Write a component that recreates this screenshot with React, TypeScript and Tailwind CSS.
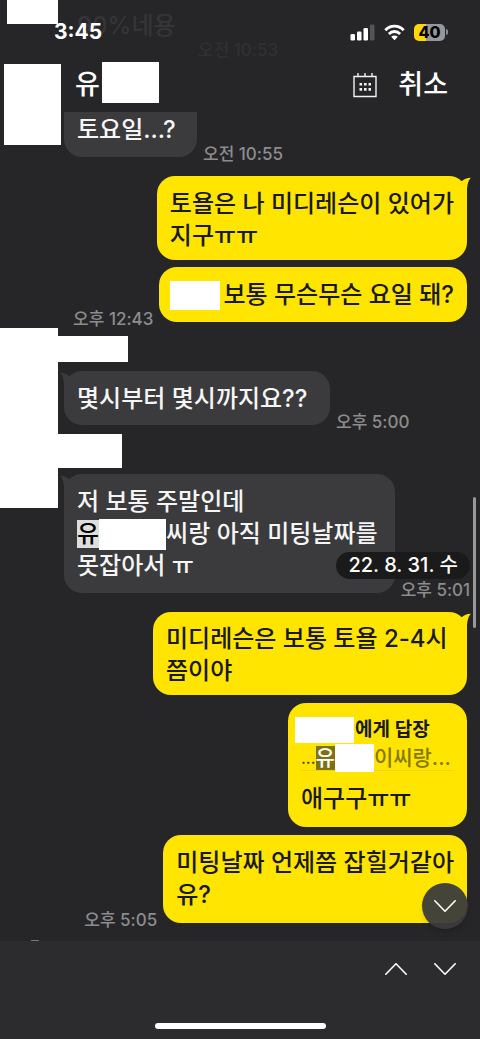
import { ReactNode } from "react";
import clsx from "clsx";

function Tail({ mine }: { mine?: boolean }) {
  return (
    <svg
      aria-hidden="true"
      width="12"
      height="20"
      viewBox="0 0 12 20"
      className={clsx(
        "absolute top-0",
        mine ? "-right-1 text-[#ffe500]" : "-left-1 -scale-x-100 text-[#3b3b3d]"
      )}
    >
      <path d="M3 5 Q6 2 11.800 1.800 Q8.400 5.500 8 13 V20 H0 V7 Z" fill="currentColor" />
    </svg>
  );
}

interface MessageProps {
  mine?: boolean;
  tail?: boolean;
  time?: string;
  className?: string;
  children: ReactNode;
}

function Message({ mine, tail, time, className, children }: MessageProps) {
  return (
    <div className={clsx("flex items-end gap-1.5", mine && "flex-row-reverse pr-[13px]")}>
      <div
        className={clsx(
          "relative shrink-0 px-[13px] text-2xl leading-8",
          mine ? "bg-[#ffe500] text-[#191919]" : "bg-[#3b3b3d] text-[#f5f5f5]",
          time && "mb-1",
          className ?? "rounded-[18px] pt-3 pb-[11px]"
        )}
      >
        {tail && <Tail mine={mine} />}
        {children}
      </div>
      {time && (
        <time className="text-[17px] leading-[14px] whitespace-nowrap text-[#8c8c8e]">{time}</time>
      )}
    </div>
  );
}

function StatusIcons() {
  return (
    <div className="flex items-center gap-[9px]">
      <svg aria-hidden="true" width="25" height="17" viewBox="0 0 25 17" fill="#fff">
        <rect x="0.500" y="10" width="4.500" height="6.500" rx="1.300" />
        <rect x="7" y="7.500" width="4.500" height="9" rx="1.300" />
        <rect x="13.500" y="4" width="4.500" height="12.500" rx="1.300" />
        <rect x="20" y="0.500" width="4.500" height="16" rx="1.300" fill="#555557" />
      </svg>
      <svg aria-hidden="true" width="21" height="17" viewBox="0 0 21 17" fill="none" stroke="#fff" strokeWidth="2.900">
        <path d="M1.300 6.200 C6.500 0.800 14.500 0.800 19.700 6.200" />
        <path d="M4.900 9.900 C8 6.700 13 6.700 16.100 9.900" />
        <path d="M7.200 12.800 Q10.500 10 13.800 12.800 L10.500 16.200 Z" fill="#fff" stroke="none" />
      </svg>
      <div className="flex items-center gap-px">
        <span className="flex h-[17px] w-[31px] items-center justify-center rounded-[5px] bg-linear-to-r from-[#ffd60a] from-40% to-[#98989a] to-40% text-base leading-none font-extrabold text-black">
          40
        </span>
        <span className="h-1.5 w-0.5 rounded-r-full bg-[#8c8c8e]" />
      </div>
    </div>
  );
}

function Chevron({ up }: { up?: boolean }) {
  return (
    <svg
      aria-hidden="true"
      width="22"
      height="12"
      viewBox="0 0 22 12"
      fill="none"
      stroke="#fff"
      strokeWidth="1.600"
      strokeLinecap="round"
    >
      <path d={up ? "M0.800 11.200 L11 0.800 L21.200 11.200" : "M0.800 0.800 L11 11.200 L21.200 0.800"} />
    </svg>
  );
}

function Header() {
  return (
    <header className="relative h-28">
      <span className="absolute top-2 left-[77px] text-2xl leading-9 text-[#353537]">90%네용</span>
      <span className="absolute top-10 left-[198px] text-[17px] leading-5 text-[#303032]">
        오전 10:53
      </span>
      <span className="absolute top-0 left-[7px] h-6 w-[51px] bg-white" />
      <span className="absolute top-16 left-1 h-[81px] w-[57px] bg-white" />
      <div className="relative flex h-16 items-center justify-between pr-8 pl-[54px]">
        <span className="text-[21px] leading-6 font-bold text-white">3:45</span>
        <StatusIcons />
      </div>
      <div className="relative -mt-0.5 flex h-11 items-center pt-0.5 pr-8 pl-[75px] text-[27px] leading-10 text-white">
        <h1 className="w-[27px]">유</h1>
        <span className="-mt-1.5 h-[41px] w-[57px] bg-white" />
        <button type="button" aria-label="날짜 선택" className="ml-auto">
          <svg aria-hidden="true" width="24" height="26" viewBox="0 0 24 26" fill="none" stroke="#f2f2f2" strokeWidth="1.400">
            <path d="M1 4.500 H23 V24.500 H1 Z M5 1 V4.500 M12 1 V4.500 M19 1 V4.500" />
            <path d="M6.500 12.200 H18 M6.500 17.400 H18" strokeWidth="2.600" strokeDasharray="2.600 1.900" />
          </svg>
        </button>
        <button type="button" className="ml-[21px]">
          취소
        </button>
      </div>
    </header>
  );
}

export default function App() {
  return (
    <div className="flex min-h-screen flex-col bg-[#262628] font-['Inter','Noto_Sans_CJK_KR',sans-serif] font-medium">
      <Header />

      <main className="relative flex-1 pb-[14px]">
        <div className="pl-16">
          <Message time="오전 10:55" className="min-w-[133px] rounded-b-[18px] pt-0.5 pb-[11px]">
            토요일...?
          </Message>
        </div>

        <div className="mt-[15px] flex flex-col gap-[7px]">
          <Message mine tail className="rounded-[18px] pt-3 pb-2">
            토욜은 나 미디레슨이 있어가
            <br />
            지구ㅠㅠ
          </Message>
          <Message mine time="오후 12:43">
            <span className="flex items-center">
              <span className="-ml-0.5 mr-[3px] h-[29px] w-[50px] bg-white" />
              보통 무슨무슨 요일 돼?
            </span>
          </Message>
        </div>

        <div className="mt-0.5 flex items-start">
          <div className="h-[180px] w-[58px] shrink-0 bg-white" />
          <div className="pt-2">
            <div className="h-[26px] w-[70px] bg-white" />
            <div className="mt-[9px] pl-1.5">
              <Message tail time="오후 5:00" className="min-w-[266px] rounded-[18px] pt-3 pb-[10px]">
                몇시부터 몇시까지요??
              </Message>
            </div>
            <div className="mt-[5px] h-[34px] w-16 bg-white" />
            <div className="mt-1.5 pl-1.5">
              <Message tail time="오후 5:01">
                저 보통 주말인데
                <br />
                <span className="flex items-center">
                  <mark className="bg-[#dedede] leading-7 text-black">유</mark>
                  <span className="h-[31px] w-[67px] bg-white" />
                  <span className="pr-1">씨랑 아직 미팅날짜를</span>
                </span>
                못잡아서 ㅠ
              </Message>
            </div>
          </div>
        </div>

        <div className="mt-[15px] flex flex-col gap-2">
          <Message mine tail className="min-w-[314px] rounded-[18px] pt-[11px] pb-2">
            미디레슨은 보통 토욜 2-4시
            <br />
            쯤이야
          </Message>
          <Message mine className="w-[179px] rounded-[18px] pt-3 pb-3">
            <div className="flex h-7 items-center pt-0.5 text-[19px] leading-7 font-semibold">
              <span className="-ml-1.5 mr-px h-[26px] w-[59px] bg-white" />
              에게 답장
            </div>
            <div className="flex h-7 items-center border-b border-[#efd700] pt-0.5 text-[21px] leading-7 text-[#85780a]">
              <span className="text-base text-[#4d4508]">...</span>
              <mark className="bg-[#7d7112] leading-6 text-white">유</mark>
              <span className="h-7 w-[39px] bg-white" />
              <span>이씨랑...</span>
            </div>
            <p className="mt-3">애구구ㅠㅠ</p>
          </Message>
          <Message mine time="오후 5:05" className="rounded-[18px] py-3">
            미팅날짜 언제쯤 잡힐거같아
            <br />
            유?
          </Message>
        </div>

        <div className="absolute top-[440px] right-2.5 rounded-full bg-[#1a1a1b] px-3 text-xl leading-[27px] text-white">
          22. 8. 31. 수
        </div>
        <div className="absolute top-[385px] right-1 h-[131px] w-[3px] rounded-full bg-[#98989a]" />
        <button
          type="button"
          aria-label="맨 아래로"
          className="absolute right-3 bottom-3 flex size-[46px] items-center justify-center rounded-full bg-[#3b3b3b]/95 shadow-md"
        >
          <Chevron />
        </button>
        <span className="absolute bottom-0 left-[31px] h-px w-2 bg-[#777779]" />
      </main>

      <footer className="flex h-[98px] flex-col items-center justify-between bg-[#2c2c2e] pb-2.5">
        <nav className="flex w-full justify-end gap-[27px] pt-[22px] pr-6">
          <button type="button" aria-label="이전 결과">
            <Chevron up />
          </button>
          <button type="button" aria-label="다음 결과">
            <Chevron />
          </button>
        </nav>
        <span className="h-1.5 w-[171px] rounded-full bg-white" />
      </footer>
    </div>
  );
}
